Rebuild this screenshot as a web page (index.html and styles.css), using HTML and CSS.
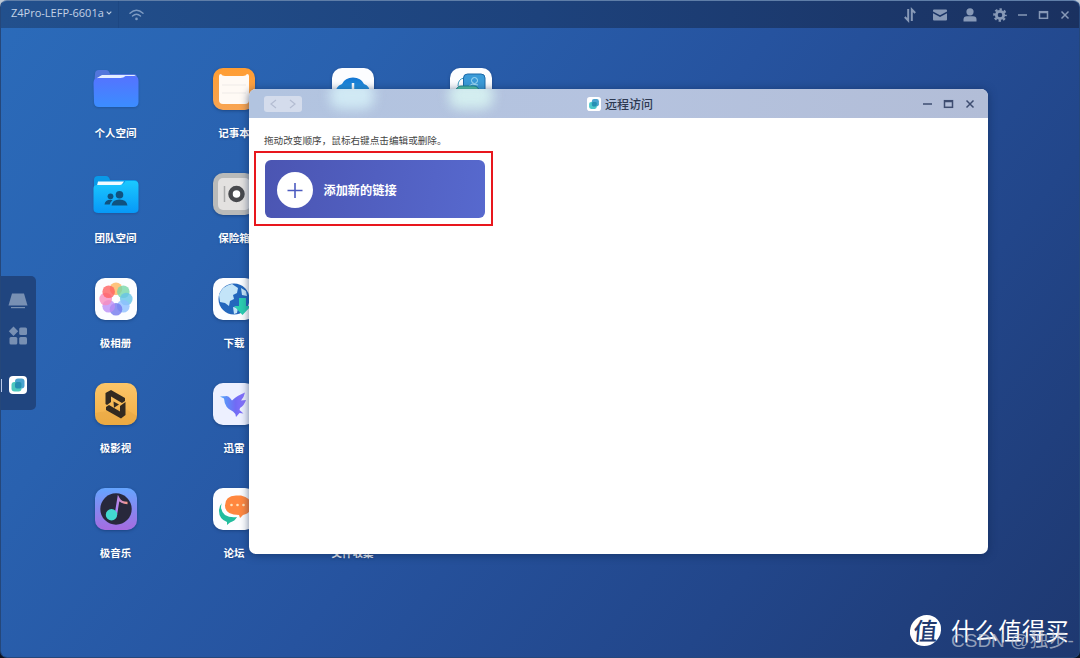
FILE: index.html
```html
<!DOCTYPE html>
<html lang="zh-CN">
<head>
<meta charset="utf-8">
<title>Z4Pro 远程访问</title>
<link rel="stylesheet" href="styles.css">
</head>
<body>
<div class="desktop">
  <header class="topbar">
    <div class="device"><span class="device-name">Z4Pro-LEFP-6601a</span>
      <svg class="caret" viewBox="0 0 6 4"><path d="M.7.7 3 3 5.3.7" fill="none" stroke="#b9cae0" stroke-width="1.1"/></svg>
    </div>
    <svg class="wifi" viewBox="0 0 15 12" fill="none" stroke="#7f9cc3" stroke-width="1.4" stroke-linecap="round"><path d="M1 4.2Q7.500-1.600 14 4.200M3.500 7Q7.500 3.500 11.500 7"/><circle cx="7.500" cy="9.900" r="1.300" fill="#7f9cc3" stroke="none"/></svg>
    <div class="tray">
      <svg class="ico" viewBox="0 0 16 16" fill="none" stroke="#8799b7" stroke-width="2"><path d="M6.200 2v11.500L2.800 10M9.800 14V2.500l3.400 3.500"/></svg>
      <svg class="ico" viewBox="0 0 16 16" fill="#8799b7"><path d="M1 3.500Q1 2.500 2 2.500h12q1 0 1 1v.9L8 8.200 1 4.400zM1 6.200l7 3.800 7-3.800v6.300q0 1-1 1H2q-1 0-1-1z"/></svg>
      <svg class="ico" viewBox="0 0 16 16" fill="#8799b7"><circle cx="8" cy="4.800" r="3.600"/><path d="M1.500 14.500v-2q0-3.200 3.500-3.200h6q3.500 0 3.500 3.200v2z"/></svg>
      <svg class="ico" viewBox="0 0 16 16" fill="none" stroke="#8799b7"><circle cx="8" cy="8" r="3.700" stroke-width="2.800"/><circle cx="8" cy="8" r="5.700" stroke-width="2.200" stroke-dasharray="2.400 2.076" stroke-dashoffset="1.200"/></svg>
    </div>
    <svg class="controls" viewBox="0 0 54 12" fill="none" stroke="#8799b7" stroke-width="1.500"><path d="M1 6h9M44.500 2.500l7 7M51.500 2.500l-7 7"/><rect x="22.500" y="2.700" width="8" height="6.600"/><path d="M22 3.500h9"/></svg>
  </header>

  <main class="apps">
    <div class="app">
      <svg class="art folder" viewBox="0 0 48 42"><defs><linearGradient id="f1" x2="0" y2="1"><stop stop-color="#5573ff"/><stop offset="1" stop-color="#3b8dff"/></linearGradient></defs><path d="M3 6q0-4 4-4h7q3 0 4 4h24q3 0 3 4v8H2z" fill="#5276dc"/><path d="M5 10l5-3h32q2 0 2 3v4H5z" fill="#e3edff"/><path d="M1.500 15q0-5 5-5h22q3 0 5-2h9q4 0 4 5v21q0 5-5 5H7q-5 0-5-5z" fill="url(#f1)"/></svg>
      <span class="label">个人空间</span>
    </div>
    <div class="app">
      <svg class="art folder" viewBox="0 0 48 42"><defs><linearGradient id="f2" x2="0" y2="1"><stop stop-color="#1bc8ff"/><stop offset="1" stop-color="#0798f7"/></linearGradient></defs><path d="M2 7q0-4 4-4h8q3 0 4 4h24q4 0 4 4v6H2z" fill="#0999e8"/><path d="M6 8.500h26l-3 4H5z" fill="#f2fbff"/><path d="M1.500 15q0-3 4-3h22q4 0 6-4h9q4 0 4 4v24q0 4-5 4H6.500q-5 0-5-4z" fill="url(#f2)"/><g fill="#10527f" transform="translate(0 1.500)"><circle cx="27.500" cy="20.300" r="3.800"/><path d="M19.500 31q.8-6 8-6t8 6z"/><circle cx="18.500" cy="21.800" r="2.900"/><path d="M12.500 30q.5-4.800 6-4.800l2 .5q-2.300 1.700-2.800 4.300z"/></g></svg>
      <span class="label">团队空间</span>
    </div>
    <div class="app">
      <div class="art tile white"><svg viewBox="0 0 42 42"><g opacity=".85"><circle cx="21" cy="10.700" r="6.300" fill="#ffad4c" fill-opacity=".85"/><circle cx="28.300" cy="13.700" r="6.300" fill="#60d09a" fill-opacity=".8"/><circle cx="31.300" cy="21" r="6.300" fill="#4cb9e3" fill-opacity=".8"/><circle cx="28.300" cy="28.300" r="6.300" fill="#7bb4ff" fill-opacity=".8"/><circle cx="21" cy="31.300" r="6.300" fill="#5b62ea" fill-opacity=".8"/><circle cx="13.700" cy="28.300" r="6.300" fill="#b27bf4" fill-opacity=".8"/><circle cx="10.700" cy="21" r="6.300" fill="#f879b3" fill-opacity=".8"/><circle cx="13.700" cy="13.700" r="6.300" fill="#ff4646" fill-opacity=".8"/></g><circle cx="21" cy="21" r="2.800" fill="#fff"/></svg></div>
      <span class="label">极相册</span>
    </div>
    <div class="app">
      <div class="art tile film"><svg viewBox="0 0 42 42"><path d="M0 30 29 25 42 33v9H0z" fill="#e0a03e" opacity=".35"/><g fill="#332a20"><path d="M16 7 30 15v3l-3 2-11-6.500v5.500l-4 3-1.500-1V10z"/><path d="M30.500 19v13l-4.500 3.500L11 27v-3l3-2 11 6.500V23z"/><path d="m18.500 18.500 5.500 3-5 3.300z"/></g></svg></div>
      <span class="label">极影视</span>
    </div>
    <div class="app">
      <div class="art tile music"><svg viewBox="0 0 42 42"><defs><linearGradient id="note" x1="0" x2="1"><stop stop-color="#a884ff"/><stop offset="1" stop-color="#ff9a80"/></linearGradient></defs><circle cx="21" cy="21" r="15.700" fill="#28283b"/><path d="M20.800 27 23.500 10.500q2.500 4.500 9 4.500" fill="none" stroke="url(#note)" stroke-width="2.500"/><circle cx="16.500" cy="26.800" r="5.700" fill="#43d8d0"/></svg></div>
      <span class="label">极音乐</span>
    </div>
    <div class="app">
      <div class="art tile notes"><svg viewBox="0 0 42 42"><path d="M6 8q0-2 2-2 1 2 4 2h18q3 0 4-2 2 0 2 2v24q0 4-4 4H10q-4 0-4-4z" fill="#fffaf5"/><path d="M9 17h24M9 25h24" stroke="#efebe8"/></svg></div>
      <span class="label">记事本</span>
    </div>
    <div class="app">
      <div class="art tile safe"><svg viewBox="0 0 42 42"><rect x="5" y="5" width="32" height="32" rx="5" fill="#e3e1e0"/><path d="M11.500 13v16" stroke="#aaa" stroke-width="1.500"/><circle cx="23.500" cy="21" r="6" fill="#fff" stroke="#48494d" stroke-width="4.500"/></svg></div>
      <span class="label">保险箱</span>
    </div>
    <div class="app">
      <div class="art tile white"><svg viewBox="0 0 42 42"><circle cx="21" cy="21" r="15.500" fill="#2367bd"/><path d="M6 17q3-9 13-11l6 4-1 5-4 2 1 4-4 2-1 5-4-3-5-1zM28 10l5 3 1 5-5-1zM20 29l5 1-1 5-3 1z" fill="#c3e4f8"/><path d="M26 20h7v8h5l-8.500 9L21 28h5z" fill="#2bcdb0"/></svg></div>
      <span class="label">下载</span>
    </div>
    <div class="app">
      <div class="art tile pale"><svg viewBox="0 0 42 42"><defs><linearGradient id="bird" x1="0" x2="1"><stop stop-color="#52a5fb"/><stop offset=".6" stop-color="#716bf4"/><stop offset="1" stop-color="#8b74ff"/></linearGradient></defs><path d="M7 13.500q3.500-.5 5-.2 3-.8 5 1.700l2 2.500q5-5 13-8-1 5-4 8l5-.5q-1.500 5-6 8l-.5 2 4 3.500-4-.5-3.500 4q-.5-4-3-5.500-8.500-3.500-9-13z" fill="url(#bird)"/></svg></div>
      <span class="label">迅雷</span>
    </div>
    <div class="app">
      <div class="art tile white"><svg viewBox="0 0 42 42"><path d="M9 15q-3 6 3 12 5 3 12 2-2 4-7 5.500l-3 2.500v-3Q6 31 6 23q0-5 3-8z" fill="#22bd9e"/><path d="M23 7.500h5q10 2 10 10t-8 9.500l-3 3-1-3q-14 0-14-9.500t11-10z" fill="#ff873f"/><g fill="#ffe2ba"><circle cx="18.500" cy="17" r="1.300"/><circle cx="24.500" cy="17" r="1.300"/><circle cx="30.500" cy="17" r="1.300"/></g></svg></div>
      <span class="label">论坛</span>
    </div>
    <div class="app">
      <div class="art tile white"><svg viewBox="0 0 42 42"><defs><linearGradient id="cloud" x2="0" y2="1"><stop stop-color="#1375d2"/><stop offset="1" stop-color="#3eb9f1"/></linearGradient></defs><path d="M4 27q-1-9 6-11 3-6.500 11-6.500t11 6.500q6 2 6 9 0 9-9 9H13q-7 0-9-7z" fill="url(#cloud)"/><path d="M21 15v13m-4-4 4 4 4-4" stroke="#fff" stroke-width="2.500" fill="none"/></svg></div>
    </div>
    <div class="app last">
      <span class="label">文件收集</span>
    </div>
    <div class="app remote">
      <div class="art tile white"><svg viewBox="0 0 42 42"><path d="M8 18q0-7 6-8" fill="none" stroke="#3e9cc0"/><rect x="13.500" y="6" width="21.500" height="19" rx="4" fill="#3b9bd8" stroke="#1c6aa8"/><circle cx="24.500" cy="12.500" r="3" fill="none" stroke="#a5dcf4"/><path d="m18 19 4-3 6 1" fill="none" stroke="#a5dcf4"/><rect x="6" y="18" width="23" height="19" rx="5" fill="#56c7a8" stroke="#1e8190"/></svg></div>
    </div>
  </main>

  <aside class="dock">
    <svg class="dock-icon" viewBox="0 0 20 20" fill="#7890b3"><path d="M4 2.500h12l3.500 12H.5z"/><path d="M3 16h14v1.200H3z"/></svg>
    <svg class="dock-icon grid-icon" viewBox="0 0 20 20" fill="#7890b3"><path d="m5.500.6 4.700 4.700L5.500 10 .8 5.300z"/><rect x="11.200" y="1.500" width="7.800" height="7.500" rx="1.500"/><rect x="1.500" y="11" width="7.800" height="7.500" rx="1.500"/><rect x="11.200" y="11" width="7.800" height="7.500" rx="1.500"/></svg>
    <svg class="dock-icon running" viewBox="0 0 20 20"><rect x="1" y="1" width="18" height="18" rx="4" fill="#fff"/><rect x="7" y="3.500" width="9.500" height="10" rx="3" fill="#4aa3cf"/><rect x="3.500" y="7" width="10" height="9.500" rx="3" fill="#4cc8be"/><rect x="7" y="7" width="6.500" height="6.500" rx="2" fill="#258fb3"/></svg>
    <span class="active-mark"></span>
  </aside>

  <section class="window">
    <header class="titlebar">
      <span class="glow"></span><span class="glow second"></span>
      <div class="nav"><svg viewBox="0 0 38 16" fill="none" stroke="#b4bdd2" stroke-width="1.200"><path d="m12 4-5 4 5 4M26 4l5 4-5 4"/></svg></div>
      <div class="title"><svg class="title-icon" viewBox="0 0 20 20"><rect width="20" height="20" rx="4" fill="#fff"/><rect x="7" y="3" width="10" height="10.500" rx="3" fill="#4aa3cf"/><rect x="3" y="7" width="11" height="10" rx="3" fill="#4cc8cb"/><rect x="7" y="7" width="7" height="6.500" rx="2" fill="#258fb3"/></svg><span>远程访问</span></div>
      <svg class="controls" viewBox="0 0 54 12" fill="none" stroke="#3e4d70" stroke-width="1.500"><path d="M1 6h9M44.500 2.500l7 7M51.500 2.500l-7 7"/><rect x="22.500" y="2.700" width="8" height="6.600"/><path d="M22 3.500h9"/></svg>
    </header>
    <div class="content">
      <p class="hint">拖动改变顺序，鼠标右键点击编辑或删除。</p>
      <button class="add"><span class="plus"><svg viewBox="0 0 36 36" stroke="#4c5bc0" stroke-width="1.600"><path d="M18 11v15M10.500 18.500h15"/></svg></span><span>添加新的链接</span></button>
    </div>
    <div class="highlight"></div>
  </section>

  <div class="brand"><span class="seal">值</span><span>什么值得买</span></div>
  <div class="credit">CSDN @独步-</div>
</div>
</body>
</html>
```

FILE: styles.css
```css
* { box-sizing: border-box; }
body {
  margin: 0;
  width: 1080px;
  height: 658px;
  overflow: hidden;
  background: linear-gradient(#bfcbd8, #17243f 20%, #0c1220);
  font-family: "Noto Sans CJK SC", sans-serif;
}
svg { display: block; }
.desktop {
  position: relative;
  width: 1080px;
  height: 658px;
  overflow: hidden;
  border: 1px solid #25477a;
  border-top-color: #5f7ea8;
  border-radius: 7px;
  background: linear-gradient(128deg, #2b6bba 0%, #2961af 25%, #26539f 50%, #22468a 75%, #1e3870 100%);
}
.topbar {
  display: flex;
  align-items: center;
  height: 27px;
  padding: 0 8px 0 10px;
  background: linear-gradient(90deg, #22508d, #1d427c 50%, #1a3160);
}
.device {
  display: flex;
  align-items: center;
  gap: 2px;
  width: 108px;
  height: 27px;
  padding-bottom: 3px;
  border-right: 1px solid #1d4782;
}
.device-name {
  font: 11px/24px "Open Sans", sans-serif;
  color: #c3d2e6;
  white-space: nowrap;
}
.caret { width: 6px; height: 4px; }
.wifi { width: 15px; height: 12px; margin-left: 10px; }
.tray { display: flex; gap: 14px; margin-left: auto; margin-right: 9px; }
.ico { width: 16px; height: 16px; }
.controls { width: 54px; height: 12px; }

.apps {
  display: grid;
  grid-template: repeat(5, 105px) / repeat(4, 118.5px);
  grid-auto-flow: column;
  padding: 39.5px 0 0 55.3px;
}
.app { display: flex; flex-direction: column; align-items: center; }
.art { width: 42px; height: 42px; flex: none; }
.folder { width: 48px; filter: drop-shadow(0 1px 1px #143b7866); }
.tile { border-radius: 10px; overflow: hidden; box-shadow: 0 1px 3px #10305f88; }
.tile svg { width: 42px; height: 42px; }
.white { background: #fcfdff; }
.pale { background: #edf0ff; }
.film { background: linear-gradient(#fbc568, #f2ae44); }
.music { background: linear-gradient(#65a5ff, #a66be0); }
.notes { background: linear-gradient(#ff9d32, #f8a553); }
.safe { background: #b9bab9; }
.label {
  margin-top: 15px;
  font-size: 10.5px;
  font-weight: 700;
  line-height: 16px;
  color: #fff;
  white-space: nowrap;
  text-shadow: 0 1px 2px #17376b99;
}
.last { grid-area: 5 / 3; }
.last .label { margin-top: 57px; }
.remote { grid-area: 1 / 4; }

.dock {
  position: absolute;
  left: 0;
  top: 275px;
  width: 35px;
  height: 134px;
  padding: 15px 7px 0;
  border-radius: 0 5px 5px 0;
  background: #20457f;
}
.dock-icon { width: 20px; height: 20px; }
.grid-icon { margin-top: 15px; }
.running { margin-top: 29px; }
.active-mark { position: absolute; left: 0; top: 103px; width: 1px; height: 13px; background: #b9c9ea; }

.window {
  position: absolute;
  left: 248px;
  top: 88px;
  width: 739px;
  height: 465px;
  border-radius: 7px;
  background: #fff;
  box-shadow: 0 1px 8px #0d254e99;
}
.titlebar {
  position: relative;
  display: grid;
  grid-template-columns: 1fr auto 1fr;
  align-items: center;
  height: 29px;
  padding: 1px 12px 0 15px;
  overflow: hidden;
  border-radius: 7px 7px 0 0;
  background: linear-gradient(90deg, #b2c4e0, #b5c3df 50%, #b2bdd7);
}
.titlebar .controls { justify-self: end; }
.glow {
  position: absolute;
  left: 81px;
  top: -7px;
  width: 44px;
  height: 27px;
  border-radius: 10px;
  background: #d6f0f8;
  opacity: .85;
  filter: blur(6px);
}
.second { left: 200px; background: #d9f5f2; }
.nav { width: 38px; height: 16px; border-radius: 3px; background: #d4dcec; }
.title {
  display: flex;
  align-items: center;
  gap: 4px;
  font-size: 12px;
  line-height: 18px;
  font-weight: 500;
  color: #2d3951;
}
.title-icon { width: 14px; height: 14px; }
.content { padding: 14px 16px 14px 15px; }
.hint { margin: 0; font-size: 9.62px; line-height: 16px; color: #444; white-space: nowrap; }
.add {
  display: flex;
  align-items: center;
  gap: 11px;
  width: 220px;
  height: 58px;
  margin: 12px 0 0 .5px;
  padding: 1px 12px 0;
  border: 0;
  border-radius: 6px;
  background: linear-gradient(100deg, #4b55b2, #5769ce);
  color: #fff;
  font: 700 12.2px/18px "Noto Sans CJK SC", sans-serif;
}
.plus { width: 36px; height: 36px; border-radius: 50%; background: #fff; }
.highlight {
  position: absolute;
  left: 5px;
  top: 62px;
  width: 239px;
  height: 75px;
  border: 2px solid #e8171d;
}
.brand {
  position: absolute;
  left: 909px;
  top: 612px;
  display: flex;
  align-items: center;
  gap: 10px;
  font-size: 23.6px;
  line-height: 34px;
  color: #fff;
  white-space: nowrap;
}
.seal {
  width: 31px;
  height: 31px;
  border-radius: 50%;
  background: #fff;
  color: #20396f;
  font-size: 24px;
  font-weight: 500;
  line-height: 30px;
  text-align: center;
  transform: skewX(-5deg);
}
.credit {
  position: absolute;
  left: 950px;
  top: 628px;
  font: 19px/24px "Liberation Sans", "Noto Sans CJK SC", sans-serif;
  color: #c5cbd8b5;
  white-space: nowrap;
}
```
